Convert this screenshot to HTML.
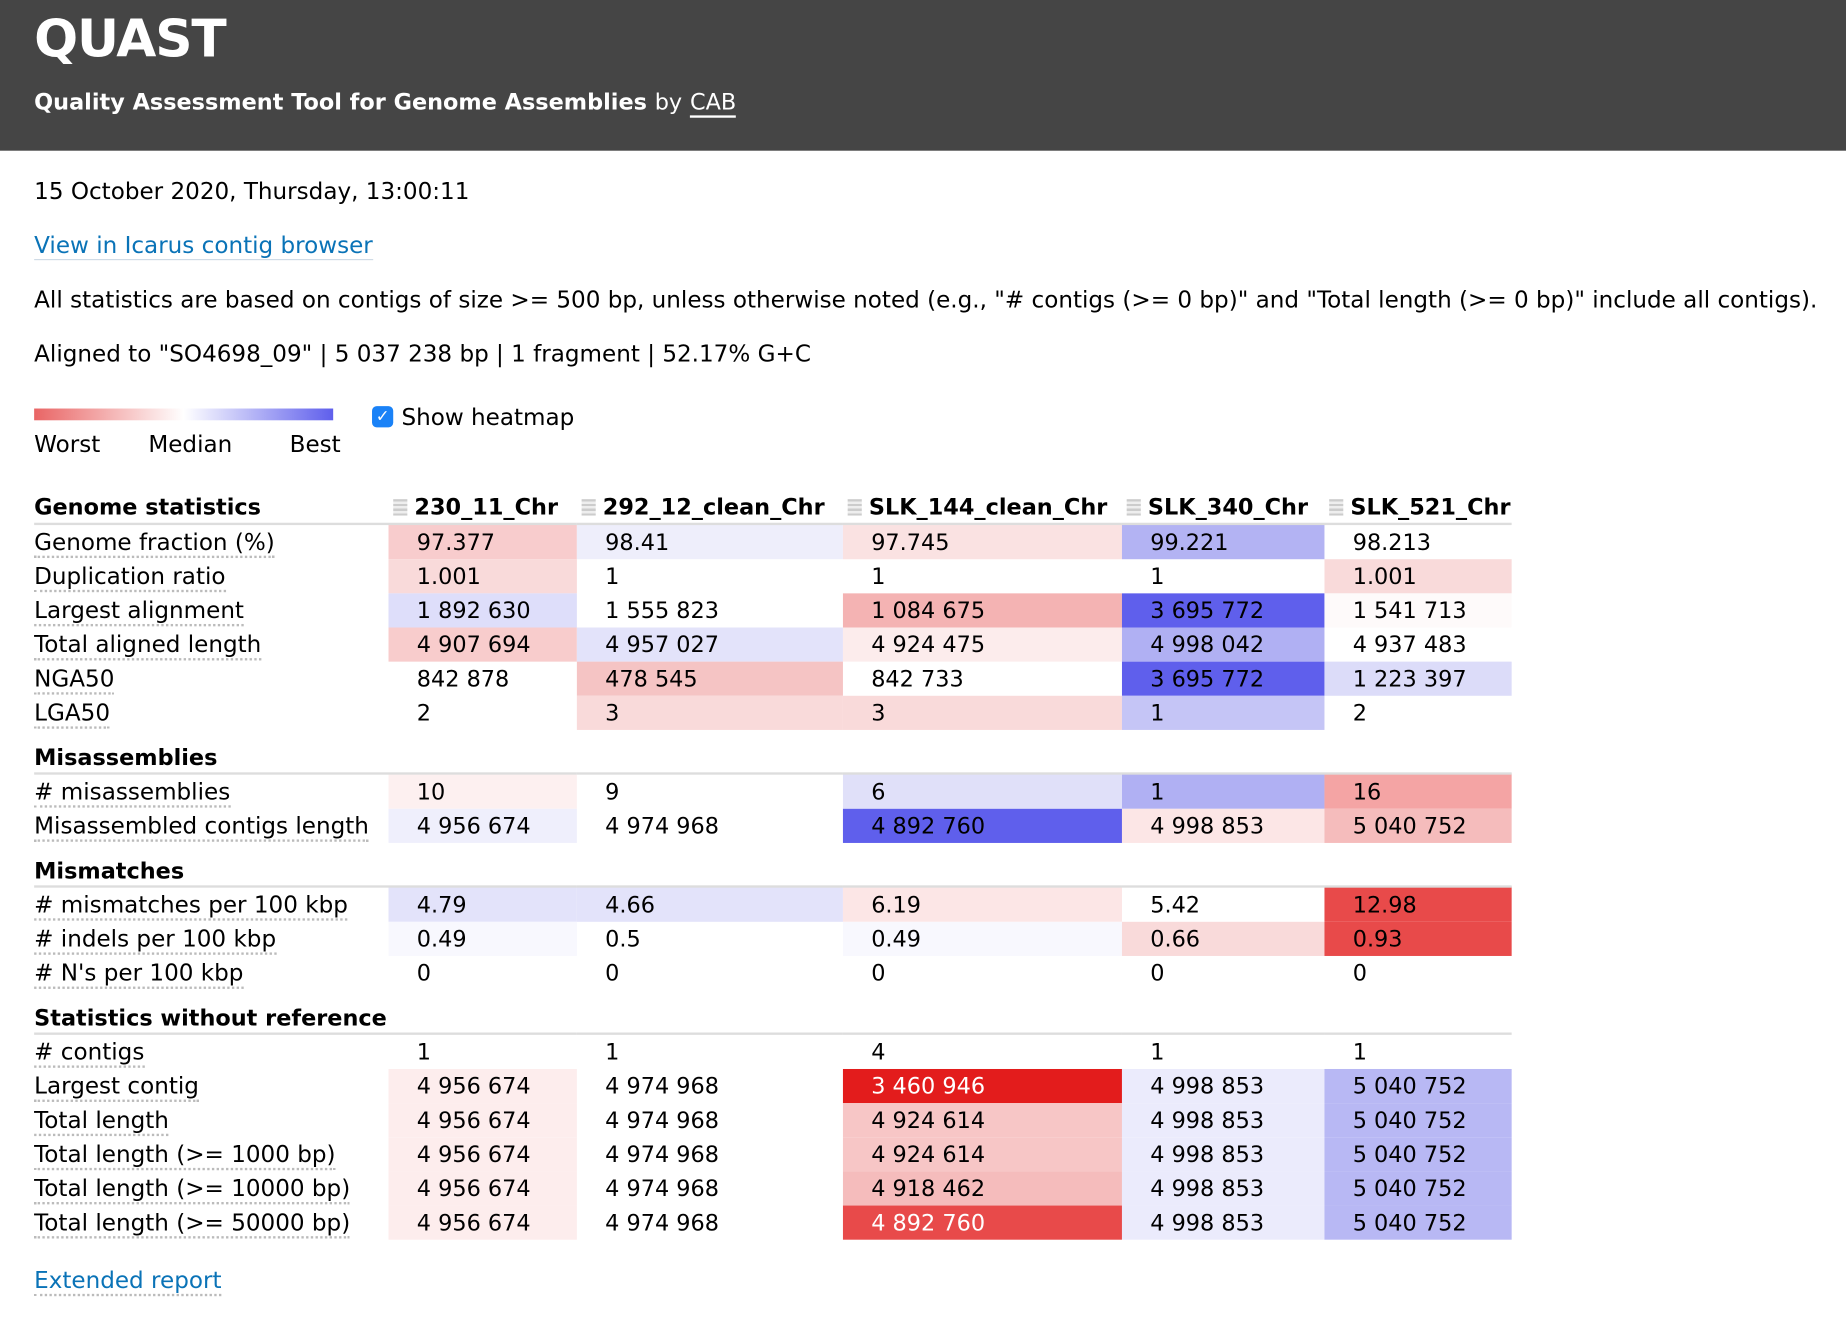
<!DOCTYPE html>
<html><head><meta charset="utf-8"><style>
html,body{margin:0;padding:0;background:#fff;overflow:hidden;width:1846px;height:1328px}
#w{width:1568px;height:1128px;transform:scale(1.17730);transform-origin:0 0;position:relative;font-family:"DejaVu Sans","Liberation Sans",sans-serif;font-size:19.6px;color:#000}
.hd{position:absolute;left:0;top:0;width:1568px;height:128px;background:#454545;color:#fff}
.hd .t{position:absolute;left:29px;top:8px;font-size:44px;font-weight:bold;letter-spacing:-1px}
.hd .s{position:absolute;left:29px;top:76px;font-size:19px;font-weight:bold}
.hd .s span{font-weight:normal}
.hd .s u{font-weight:normal;text-decoration:none;border-bottom:2px solid #fff}
.p{position:absolute;left:29px;white-space:nowrap}
a{color:#0a73b7;text-decoration:none;border-bottom:1.5px solid #cfdbe6}
.bar{position:absolute;left:29px;top:347px;width:254px;height:10px;background:linear-gradient(to right,#e96565,#fff 50%,#5f5fec)}
.cb{position:absolute;left:316px;top:345px;width:18px;height:18px;background:#1a82f7;border-radius:4px;color:#fff;font-size:14px;line-height:18px;text-align:center}
table{position:absolute;left:29px;top:417px;border-collapse:collapse}
td{height:29px;padding:0;white-space:nowrap;vertical-align:middle}
td.l span{border-bottom:2px dotted #bbb}
td.v{padding-left:24px;font-size:19px}
tr.h td{font-weight:bold;height:27px;border-bottom:2px solid #ddd;font-size:19px}
tr.g td{font-weight:bold;height:35px;vertical-align:bottom;padding-bottom:1px;border-bottom:2px solid #ddd;font-size:19px}
.hi{display:inline-block;width:12px;height:14px;margin:0 6px 0 4px;background:repeating-linear-gradient(#ccc 0 2px,#eee 2px 4px);vertical-align:-1px}
.wt{color:#fff}
</style></head><body><div id="w">
<div class="hd"><div class="t">QUAST</div><div class="s">Quality Assessment Tool for Genome Assemblies <span>by</span> <u>CAB</u></div></div>
<div class="p" style="top:151px">15 October 2020, Thursday, 13:00:11</div>
<div class="p" style="top:197px"><a>View in Icarus contig browser</a></div>
<div class="p" style="top:243px">All statistics are based on contigs of size &gt;= 500 bp, unless otherwise noted (e.g., "# contigs (&gt;= 0 bp)" and "Total length (&gt;= 0 bp)" include all contigs).</div>
<div class="p" style="top:289px">Aligned to "SO4698_09" | 5 037 238 bp | 1 fragment | 52.17% G+C</div>
<div class="bar"></div>
<div class="p" style="top:366px">Worst</div><div class="p" style="top:366px;left:126px">Median</div><div class="p" style="top:366px;left:246px">Best</div>
<div class="cb">✓</div><div class="p" style="top:343px;left:341px">Show heatmap</div>
<table>
<colgroup><col style="width:301px"><col style="width:160px"><col style="width:226px"><col style="width:237px"><col style="width:172px"><col style="width:159px"></colgroup>
<tr class="h"><td>Genome statistics</td><td><span class="hi"></span>230_11_Chr</td><td><span class="hi"></span>292_12_clean_Chr</td><td><span class="hi"></span>SLK_144_clean_Chr</td><td><span class="hi"></span>SLK_340_Chr</td><td><span class="hi"></span>SLK_521_Chr</td></tr>
<tr><td class="l"><span>Genome fraction (%)</span></td><td class="v" style="background:#f8cccd">97.377</td><td class="v" style="background:#eeeefb">98.41</td><td class="v" style="background:#fae2e2">97.745</td><td class="v" style="background:#b3b3f3">99.221</td><td class="v">98.213</td></tr>
<tr><td class="l"><span>Duplication ratio</span></td><td class="v" style="background:#f9dada">1.001</td><td class="v">1</td><td class="v">1</td><td class="v">1</td><td class="v" style="background:#f9dada">1.001</td></tr>
<tr><td class="l"><span>Largest alignment</span></td><td class="v" style="background:#dedefa">1 892 630</td><td class="v">1 555 823</td><td class="v" style="background:#f4b3b3">1 084 675</td><td class="v" style="background:#5f5fec">3 695 772</td><td class="v" style="background:#fefafa">1 541 713</td></tr>
<tr><td class="l"><span>Total aligned length</span></td><td class="v" style="background:#f8cccc">4 907 694</td><td class="v" style="background:#e3e3fa">4 957 027</td><td class="v" style="background:#fcecec">4 924 475</td><td class="v" style="background:#b0b0f3">4 998 042</td><td class="v">4 937 483</td></tr>
<tr><td class="l"><span>NGA50</span></td><td class="v">842 878</td><td class="v" style="background:#f5c4c4">478 545</td><td class="v">842 733</td><td class="v" style="background:#5f5fec">3 695 772</td><td class="v" style="background:#dcdcf9">1 223 397</td></tr>
<tr><td class="l"><span>LGA50</span></td><td class="v">2</td><td class="v" style="background:#f9dada">3</td><td class="v" style="background:#f9dada">3</td><td class="v" style="background:#c5c5f6">1</td><td class="v">2</td></tr>
<tr class="g"><td colspan="6">Misassemblies</td></tr>
<tr><td class="l"><span># misassemblies</span></td><td class="v" style="background:#fdf0f0">10</td><td class="v">9</td><td class="v" style="background:#e0e0f9">6</td><td class="v" style="background:#b0b0f3">1</td><td class="v" style="background:#f4a4a4">16</td></tr>
<tr><td class="l"><span>Misassembled contigs length</span></td><td class="v" style="background:#efeffc">4 956 674</td><td class="v">4 974 968</td><td class="v" style="background:#5f5fec">4 892 760</td><td class="v" style="background:#fce6e6">4 998 853</td><td class="v" style="background:#f5bcbc">5 040 752</td></tr>
<tr class="g"><td colspan="6">Mismatches</td></tr>
<tr><td class="l"><span># mismatches per 100 kbp</span></td><td class="v" style="background:#e3e3fa">4.79</td><td class="v" style="background:#e3e3fa">4.66</td><td class="v" style="background:#fce6e6">6.19</td><td class="v">5.42</td><td class="v" style="background:#e84a4a">12.98</td></tr>
<tr><td class="l"><span># indels per 100 kbp</span></td><td class="v" style="background:#f8f8fe">0.49</td><td class="v">0.5</td><td class="v" style="background:#f8f8fe">0.49</td><td class="v" style="background:#f9dada">0.66</td><td class="v" style="background:#e84a4a">0.93</td></tr>
<tr><td class="l"><span># N's per 100 kbp</span></td><td class="v">0</td><td class="v">0</td><td class="v">0</td><td class="v">0</td><td class="v">0</td></tr>
<tr class="g"><td colspan="6">Statistics without reference</td></tr>
<tr><td class="l"><span># contigs</span></td><td class="v">1</td><td class="v">1</td><td class="v">4</td><td class="v">1</td><td class="v">1</td></tr>
<tr><td class="l"><span>Largest contig</span></td><td class="v" style="background:#fdeded">4 956 674</td><td class="v">4 974 968</td><td class="v wt" style="background:#e31c1c">3 460 946</td><td class="v" style="background:#ebebfc">4 998 853</td><td class="v" style="background:#b8b8f4">5 040 752</td></tr>
<tr><td class="l"><span>Total length</span></td><td class="v" style="background:#fdeded">4 956 674</td><td class="v">4 974 968</td><td class="v" style="background:#f7c6c6">4 924 614</td><td class="v" style="background:#ebebfc">4 998 853</td><td class="v" style="background:#b8b8f4">5 040 752</td></tr>
<tr><td class="l"><span>Total length (&gt;= 1000 bp)</span></td><td class="v" style="background:#fdeded">4 956 674</td><td class="v">4 974 968</td><td class="v" style="background:#f7c6c6">4 924 614</td><td class="v" style="background:#ebebfc">4 998 853</td><td class="v" style="background:#b8b8f4">5 040 752</td></tr>
<tr><td class="l"><span>Total length (&gt;= 10000 bp)</span></td><td class="v" style="background:#fdeded">4 956 674</td><td class="v">4 974 968</td><td class="v" style="background:#f5bcbc">4 918 462</td><td class="v" style="background:#ebebfc">4 998 853</td><td class="v" style="background:#b8b8f4">5 040 752</td></tr>
<tr><td class="l"><span>Total length (&gt;= 50000 bp)</span></td><td class="v" style="background:#fdeded">4 956 674</td><td class="v">4 974 968</td><td class="v wt" style="background:#e84a4a">4 892 760</td><td class="v" style="background:#ebebfc">4 998 853</td><td class="v" style="background:#b8b8f4">5 040 752</td></tr>
</table>
<div class="p" style="top:1076px"><a style="border-bottom:2px dotted #bbb">Extended report</a></div>
</div></body></html>
